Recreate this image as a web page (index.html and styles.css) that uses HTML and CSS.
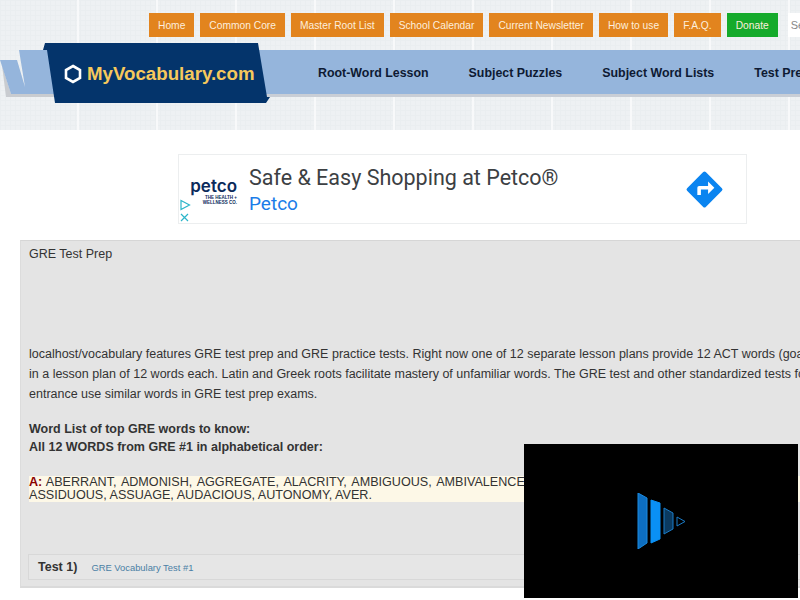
FILE: index.html
```html
<!DOCTYPE html>
<html lang="en">
<head>
    <meta charset="UTF-8">
    <title>GRE Test Prep - MyVocabulary.com</title>
    <link rel="stylesheet" href="styles.css">
</head>
<body>
    <div class="header">
        <div class="top-nav">
            <a class="top-btn" href="#">Home</a>
            <a class="top-btn" href="#">Common Core</a>
            <a class="top-btn" href="#">Master Root List</a>
            <a class="top-btn" href="#">School Calendar</a>
            <a class="top-btn" href="#">Current Newsletter</a>
            <a class="top-btn" href="#">How to use</a>
            <a class="top-btn" href="#">F.A.Q.</a>
            <a class="top-btn donate" href="#">Donate</a>
            <input class="search" type="text" placeholder="Search">
        </div>
        <div class="main-nav">
            <a href="#">Root-Word Lesson</a>
            <a href="#">Subject Puzzles</a>
            <a href="#">Subject Word Lists</a>
            <a href="#">Test Prep</a>
        </div>
        <svg class="ribbon" width="60" height="60" viewBox="0 0 60 60">
            <polygon points="2,25 6,57 53,57 53,54 11,54" fill="#c9ccd0"/>
            <polygon points="0,20 17,20 25,47 19,10 53,10 53,54 11,54" fill="#95b5dc"/>
        </svg>
        <div class="logo">
            <svg class="logo-hex" width="18" height="20" viewBox="0 0 18 20">
                <polygon points="9,2 16,6 16,14 9,18 2,14 2,6" fill="none" stroke="#fff" stroke-width="2.6"/>
            </svg>
            <span class="logo-text">MyVocabulary.com</span>
        </div>
    </div>

    <div class="ad">
        <div class="ad-brand">
            <div class="ad-brand-name">petco</div>
            <div class="ad-brand-tag">THE HEALTH +<br>WELLNESS CO.</div>
        </div>
        <div class="ad-copy">
            <div class="ad-title">Safe &amp; Easy Shopping at Petco®</div>
            <div class="ad-name">Petco</div>
        </div>
        <svg class="ad-arrow" width="43" height="43" viewBox="0 0 24 24">
            <path fill="#0a84f0" d="M21.71 11.29l-9-9a1 1 0 0 0-1.42 0l-9 9a1 1 0 0 0 0 1.42l9 9a1 1 0 0 0 1.42 0l9-9a1 1 0 0 0 0-1.42z"/>
            <path fill="#fff" d="M14 14.5V12h-4v3H8v-4a1 1 0 0 1 1-1h5V7.5l3.5 3.5z"/>
        </svg>
        <div class="ad-marks">
            <svg width="12" height="12" viewBox="0 0 12 12"><path d="M2 1.5l8.5 4.5-8.5 4.5z" fill="none" stroke="#2bb5c9" stroke-width="1.2"/></svg>
            <svg width="11" height="11" viewBox="0 0 11 11"><path d="M2 2l7 7M9 2l-7 7" stroke="#2bb5c9" stroke-width="1.2"/></svg>
        </div>
    </div>

    <div class="content">
        <div class="page-title">GRE Test Prep</div>
        <p class="intro">localhost/vocabulary features GRE test prep and GRE practice tests. Right now one of 12 separate lesson plans provide 12 ACT words (goal<br>in a lesson plan of 12 words each. Latin and Greek roots facilitate mastery of unfamiliar words. The GRE test and other standardized tests for<br>entrance use similar words in GRE test prep exams.</p>
        <p class="list-head">Word List of top GRE words to know:<br>All 12 WORDS from GRE #1 in alphabetical order:</p>
        <p class="words"><span class="letter">A:</span> <span class="word-line">ABERRANT, ADMONISH, AGGREGATE, ALACRITY, AMBIGUOUS, AMBIVALENCE,</span><br>ASSIDUOUS, ASSUAGE, AUDACIOUS, AUTONOMY, AVER.</p>
        <div class="test-row">
            <span class="test-num">Test 1)</span>
            <a class="test-link" href="#">GRE Vocabulary Test #1</a>
        </div>
    </div>

    <div class="video">
        <svg width="50" height="56" viewBox="0 0 50 56">
            <polygon points="2,0 11,5 11,50 2,56" fill="#0d6ec0" stroke="#1a8ae0"/>
            <polygon points="15,7 24,10 24,46 15,50" fill="#0a90f5" stroke="#0a90f5"/>
            <polygon points="28,15 37,20 37,36 28,41" fill="#0b3a60" stroke="#1a7cc8"/>
            <polygon points="41,24 49,28.5 41,33" fill="none" stroke="#1a7cc8"/>
        </svg>
    </div>
</body>
</html>
```

FILE: styles.css
```css
html, body {
    height: 100%;
}

body {
    margin: 0;
    width: 800px;
    overflow: hidden;
    background: #fff;
    font-family: "Liberation Sans", Arial, sans-serif;
    font-size: 12.5px;
    color: #333;
}

.header {
    position: relative;
    height: 130px;
    box-sizing: border-box;
    padding-top: 13px;
    background-color: #eef1f3;
    background-image:
        linear-gradient(90deg, #f8f9fa 2px, transparent 2px),
        linear-gradient(90deg, #eaeef0 1px, transparent 1px),
        linear-gradient(#eaeef0 1px, transparent 1px);
    background-size: 79px 100%, 5px 5px, 5px 5px;
    background-position: -2px 0, 0 0, 0 0;
}

.top-nav {
    display: flex;
    gap: 6px;
    padding-left: 149px;
    height: 24px;
}

.top-btn {
    display: flex;
    align-items: center;
    padding: 0 9px;
    background: #e2841e;
    color: #fdeedd;
    font-size: 10.25px;
    text-decoration: none;
    white-space: nowrap;
}

.donate {
    background: #15aa2b;
}

.search {
    width: 60px;
    flex: none;
    box-sizing: border-box;
    margin-left: 4px;
    padding: 0 3px;
    border: 0;
    background: #fff;
    font-family: "Liberation Sans", Arial, sans-serif;
    font-size: 11px;
}

.search::placeholder {
    color: #888;
}

.main-nav {
    display: flex;
    gap: 40px;
    height: 44px;
    box-sizing: content-box;
    align-items: center;
    margin-top: 13px;
    margin-left: 45px;
    padding-left: 273px;
    background: #95b5dc;
    border-bottom: 3px solid #c9ced6;
    white-space: nowrap;
}

.main-nav a {
    position: relative;
    top: 1px;
    color: #0e1a33;
    font-size: 12.4px;
    font-weight: bold;
    text-decoration: none;
}

.ribbon {
    position: absolute;
    left: 0;
    top: 40px;
}

.logo {
    position: absolute;
    left: 43px;
    top: 43px;
    width: 228px;
    height: 60px;
    box-sizing: border-box;
    padding: 1px 0 0 21px;
    display: flex;
    align-items: center;
    gap: 5px;
    background: #04346b;
    clip-path: polygon(2px 0, 215px 0, 224px 54px, 227px 54px, 223px 60px, 12px 60px, 4px 7px, 0 7px);
}

.logo-text {
    color: #f6c95c;
    font-size: 18.7px;
    font-weight: bold;
    white-space: nowrap;
}

.ad {
    position: relative;
    display: flex;
    align-items: center;
    width: 569px;
    height: 70px;
    box-sizing: border-box;
    margin: 24px 0 16px 178px;
    border: 1px solid #eceeef;
    background: #fff;
}

.ad-brand {
    position: relative;
    top: 2px;
    width: 70px;
    padding-right: 12px;
    box-sizing: border-box;
    text-align: right;
    color: #0b2a5b;
}

.ad-brand-name {
    font-family: "Inter", "Liberation Sans", sans-serif;
    font-size: 17px;
    font-weight: 600;
    line-height: 17px;
}

.ad-brand-tag {
    font-size: 4.5px;
    font-weight: bold;
    line-height: 5px;
}

.ad-title {
    font-family: "Roboto", "Open Sans", sans-serif;
    font-size: 21.5px;
    line-height: 28px;
    margin-top: 2px;
    color: #3c4043;
}

.ad-name {
    font-family: "Roboto", "Open Sans", sans-serif;
    font-size: 19px;
    line-height: 24px;
    color: #1a7ce8;
}

.ad-arrow {
    position: absolute;
    right: 20px;
    top: 13px;
}

.ad-marks {
    position: absolute;
    left: 0;
    bottom: 0;
    display: flex;
    flex-direction: column;
    gap: 1px;
}

.ad-marks svg {
    display: block;
}

.content {
    margin-left: 20px;
    width: 1000px;
    height: 348px;
    box-sizing: border-box;
    padding: 3px 8px 0;
    background: #e4e4e4;
    border-top: 1px solid #d6d6d6;
    border-left: 1px solid #dcdcdc;
    border-bottom: 2px solid #dadada;
    white-space: nowrap;
}

.page-title {
    line-height: 20px;
}

.intro {
    margin: 80px 0 0;
    line-height: 20px;
}

.list-head {
    margin: 16px 0 0;
    line-height: 18px;
    font-weight: bold;
}

.words {
    margin: 20px 0 0;
    font-size: 12.6px;
    line-height: 13px;
    background: #fdf8e7;
}

.word-line {
    word-spacing: 1.6px;
}

.letter {
    color: #8b0000;
    font-weight: bold;
}

.test-row {
    display: flex;
    align-items: center;
    gap: 14px;
    height: 26px;
    box-sizing: border-box;
    margin: 52px 0 0 -1px;
    padding-left: 9px;
    border: 1px solid #d8d8d8;
    background: #e6e6e6;
}

.test-num {
    font-weight: bold;
}

.test-link {
    color: #4a7fa5;
    font-size: 9.4px;
    text-decoration: none;
}

.video {
    position: fixed;
    left: 524px;
    top: 444px;
    width: 274px;
    height: 154px;
    display: flex;
    align-items: center;
    justify-content: center;
    background: #000;
}
```
